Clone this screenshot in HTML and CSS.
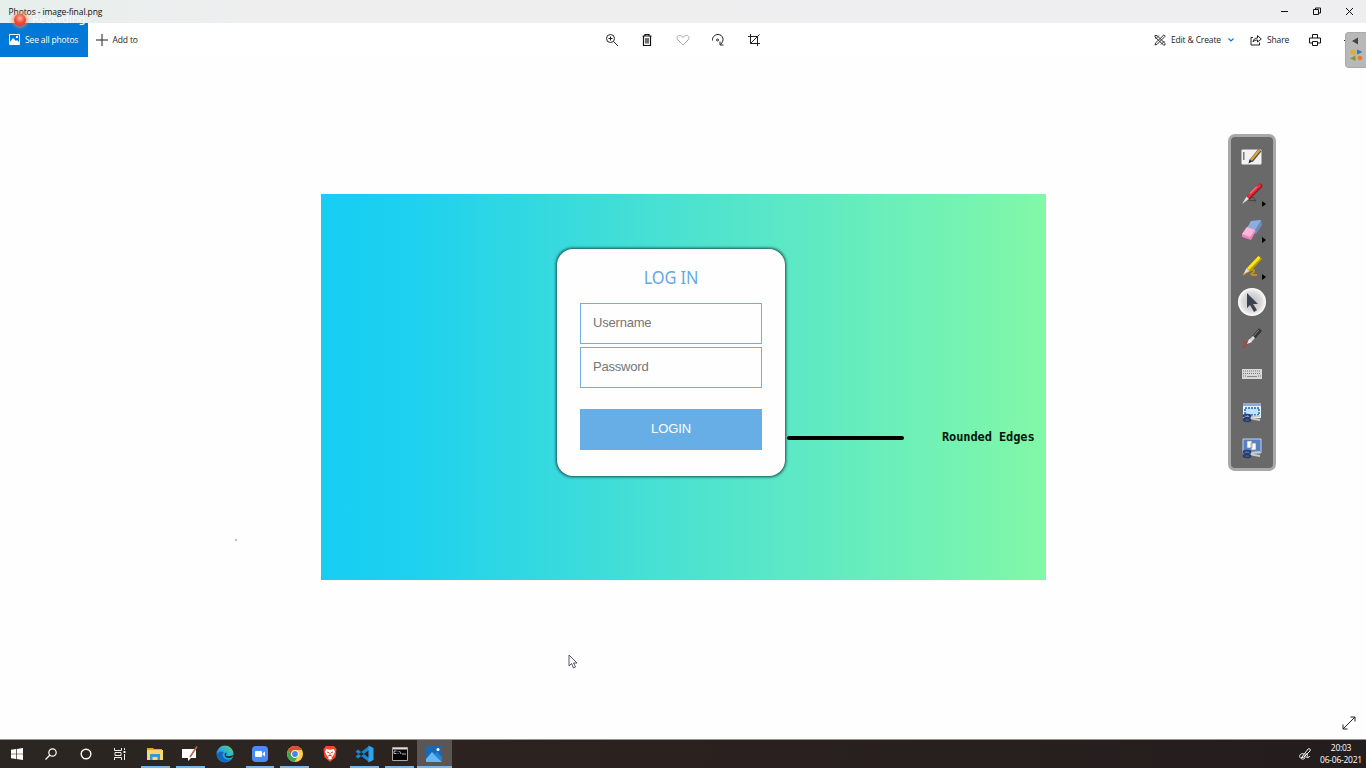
FILE: index.html
```html
<!DOCTYPE html>
<html lang="en">
<head>
<meta charset="utf-8">
<title>Photos - image-final.png</title>
<link rel="stylesheet" href="styles.css">
</head>
<body>
<div class="desktop">
  <header class="titlebar">
    <span class="title">Photos - image-final.png</span>
    <svg class="winctl" width="82" height="23" viewBox="0 0 82 23" fill="none" stroke="#111" stroke-width="1"><path d="M9 11.5h7M41.5 9.5h5v5h-5zM43.5 9.500v-1.500h5v5h-2M74 8l7 7M81 8l-7 7"/></svg>
  </header>
  <nav class="toolbar">
    <div class="see-all">
      <svg width="11" height="11" viewBox="0 0 11 11"><path fill="none" stroke="#fff" d="M.5.5h10v10H.5z"/><path fill="#fff" d="M1 8l3-4 3 3 1-1 2 2v2H1zM7 2h2v2H7z"/></svg>
      <span class="label all-text">See all photos</span>
    </div>
    <div class="add-to">
      <svg width="12" height="12" viewBox="0 0 12 12"><path d="M6 0v12M0 6h12" stroke="#222"/></svg>
      <span class="label add-text">Add to</span>
    </div>
    <div class="tools">
      <svg width="14" height="14" viewBox="0 0 14 14" fill="none" stroke="#222"><circle cx="5.500" cy="5.500" r="4"/><path d="M8.500 8.500l4.500 4.500M3.500 5.500h4M5.500 3.500v4"/></svg>
      <svg width="14" height="14" viewBox="0 0 14 14" fill="none" stroke="#111" stroke-width="1.200"><path d="M2.500 3h9M5 3V1.500h4V3M3.500 3v9.500h7V3M6 5v5.500M8 5v5.500"/></svg>
      <svg width="14" height="14" viewBox="0 0 14 14" fill="none" stroke="#aaa"><path d="M7 12L2 7C0 4.500 1.500 2.500 3.500 2.500 5.500 2.500 6.500 3.500 7 4.500 7.500 3.500 8.500 2.500 10.500 2.500 12.500 2.500 14 4.500 12 7z"/></svg>
      <svg width="14" height="14" viewBox="0 0 14 14" fill="none" stroke="#222"><path d="M1.500 7.500C1 4 4 1.500 7 1.500c5 0 7 6 2.500 10M9 8.500v3.500h3.500"/><circle cx="6.500" cy="7" r="1"/></svg>
      <svg width="14" height="14" viewBox="0 0 14 14" fill="none" stroke="#222"><path d="M3.500 1v9.500H13M1 3.500h9.500V13M3.500 10.500L12.500 1.500"/></svg>
    </div>
    <div class="actions">
      <svg width="12" height="12" viewBox="0 0 12 12" fill="none" stroke="#333"><path d="M1 1.500h2l8 8v1.500H9.500L1 3zM10 .8l1.300 1.300-8 8L1 11l.8-2.300zM1.500 5L5 1.500M7 10.500L10.500 7"/></svg>
      <span class="label edit-text">Edit &amp; Create</span>
      <svg class="chev" width="6" height="4" viewBox="0 0 6 4"><path d="M.5.5L3 3 5.500.5" fill="none" stroke="#0878d0" stroke-width="1.200"/></svg>
      <svg class="share-icon" width="12" height="12" viewBox="0 0 12 12" fill="none" stroke="#222"><path d="M3 3.500H1v7.500h8.500V8.500M3 8c.5-3 2-4 4.500-4V1.500L11.300 5 7.500 8V6C5.500 6 4 6.500 3 8z"/></svg>
      <span class="label share-text">Share</span>
      <svg class="print" width="12" height="12" viewBox="0 0 12 12" fill="none" stroke="#111"><path d="M3.500 4V.5h5V4M3 9H.5V4h11v5H9M3.500 7.500h5v4h-5z"/></svg>
      <span class="dot"></span>
    </div>
  </nav>
  <main class="stage">
    <section class="picture">
      <form class="card">
        <h1>LOG IN</h1>
        <div class="field">Username</div>
        <div class="field">Password</div>
        <div class="login">LOGIN</div>
      </form>
      <div class="callout"><span class="rule"></span><span class="note">Rounded&nbsp;Edges</span></div>
    </section>
    <svg class="expand" width="14" height="14" viewBox="0 0 14 14" fill="none" stroke="#222"><path d="M1 13L13 1M8.500 1H13v4.500M1 8.500V13h4.500"/></svg>
  </main>
  <footer class="taskbar">
    <div class="task sys"><svg width="12" height="12" viewBox="0 0 12 12" fill="#fff"><path d="M0 1.700l5-.7v4.700H0zM5.700.9L12 0v5.700H5.700zM0 6.300h5V11l-5-.7zM5.700 6.300H12V12l-6.300-.9z"/></svg></div>
    <div class="task sys"><svg width="12" height="12" viewBox="0 0 12 12" fill="none" stroke="#fff" stroke-width="1.200"><circle cx="7.500" cy="4.500" r="3.700"/><path d="M5 7L.5 11.500"/></svg></div>
    <div class="task sys"><svg width="12" height="12" viewBox="0 0 12 12"><circle cx="6" cy="6" r="4.800" fill="none" stroke="#fff" stroke-width="1.400"/></svg></div>
    <div class="task sys"><svg width="12" height="12" viewBox="0 0 12 12" fill="none" stroke="#eee"><path d="M.5 0v2.500h7V0M1 4.500h6v3H1zM.5 12V9.500h7V12M10.500 0v2M10.500 6v6"/><path fill="#fff" stroke="none" d="M9.500 3h2v2h-2z"/></svg></div>
    <div class="task open"><svg width="16" height="14" viewBox="0 0 16 14"><path fill="#e9a51f" d="M0 1h6l1 1h8v4H0z"/><path fill="#ffd766" d="M0 3h16v10H0z"/><path fill="#3498db" d="M3 7h10v6h-2.500v-3h-5v3H3z"/></svg></div>
    <div class="task open"><svg width="16" height="16" viewBox="0 0 16 16"><path fill="#fff" d="M0 3h14v9H9l-3 3v-3H0z"/><path d="M15 .5L8 11" stroke="#b8664c" stroke-width="1.600"/></svg></div>
    <div class="task"><svg width="18" height="18" viewBox="0 0 18 18"><defs><linearGradient id="edge" x1="0" y1="1" x2="1" y2="0"><stop stop-color="#1479d4"/><stop offset=".55" stop-color="#26b0dd"/><stop offset="1" stop-color="#67d75b"/></linearGradient></defs><circle cx="9" cy="9" r="8.500" fill="url(#edge)"/><path fill="#1266bd" d="M1 9c2-3 5-3 7-2-2 2-2 5 1 7 2 1 4 1 6 0-3 4-9 4-12 0C1 12 .8 10.500 1 9z"/><path fill="#29231f" d="M10 7.500c1 1 .3 2-.3 2.700 1 1.500 4.300 1.600 7.300-.2l-.5 2c-3 2-7.500.8-7.800-2 0-1 .3-2 1.300-2.500z"/></svg></div>
    <div class="task open"><svg width="16" height="16" viewBox="0 0 16 16"><rect width="16" height="16" rx="4" fill="#4a8cf6"/><rect x="3" y="5" width="7" height="6" rx="1" fill="#fff"/><path fill="#fff" d="M10.500 7.500L13 5.500v5l-2.500-2z"/></svg></div>
    <div class="task open"><svg width="16" height="16" viewBox="0 0 16 16"><circle cx="8" cy="8" r="8" fill="#ffd045"/><path fill="#e34a3b" d="M1.200 4A8 8 0 0 1 15 4H8a4 4 0 0 0-3.500 6z"/><path fill="#37a853" d="M1.200 4A8 8 0 0 0 7.500 16L11 10a4 4 0 0 1-6.500 0z"/><circle cx="8" cy="8" r="3.800" fill="#fff"/><circle cx="8" cy="8" r="2.900" fill="#4385ec"/></svg></div>
    <div class="task"><svg width="14" height="16" viewBox="0 0 14 16"><path fill="#f04a28" d="M3 0h8l2.500 3-.8 8L7 16l-5.700-5L.5 3z"/><path fill="#fff" d="M3 3l4 .7L11 3l1 3-2 4-1.500 1 .5 1.500-2 1.200-2-1.200.5-1.500L4 10 2 6z"/><path d="M4 6l2 .7M10 6l-2 .7M7 7v3M5 10l2-.7 2 .7" stroke="#f04a28" fill="none"/></svg></div>
    <div class="task open"><svg width="18" height="18" viewBox="0 0 18 18"><path fill="#1687d0" d="M0 6l2-1.500 11 8.500v4L0 7zM0 12l2 1.500L13 5V1L0 11z"/><path fill="#2ba5ef" d="M12.500.5L17.500 3v12l-5 2.500z"/></svg></div>
    <div class="task open"><svg width="16" height="14" viewBox="0 0 16 14"><path fill="#050505" stroke="#aaa" d="M.5.5h15v13H.5z"/><path fill="#ddd" d="M1 1h14v1.500H1z"/><path d="M4.500 4H2v2.500h2.500M6 4v.8M6 6v.8M7.500 4l1.500 3M10 7h4" stroke="#ddd" fill="none" stroke-width=".8"/></svg></div>
    <div class="task open active"><svg width="16" height="16" viewBox="0 0 16 16"><path fill="#1769b5" d="M0 0h16v16H0z"/><path fill="#65b8f1" d="M0 13l6-7 10 10H0z"/><path fill="#2383d3" d="M8 8l3-2 5 5v5z"/><circle cx="12" cy="3.500" r="1.500" fill="#fff"/></svg></div>
    <div class="tray">
      <svg width="12" height="14" viewBox="0 0 12 14" fill="none" stroke="#eee"><path d="M3 10l6-8c1-1 3 0 2 2L5 10l-3 1zM5 7C2 6 0 8 .8 10s4 3 5 1-1-3 1-4 2 2 1 3 2 1 3-1"/></svg>
      <div class="clock"><span class="time">20:03</span><span class="date">06-06-2021</span></div>
    </div>
  </footer>

  <div class="recording"><span class="lamp"></span><span class="rec-text">Recording</span></div>
  <div class="sidetab">
    <svg width="21" height="35" viewBox="0 0 21 35"><path fill="#444" d="M6 8l6-3.500v7z"/><path fill="#e0ac36" d="M4.500 17h5v4.500h-5z"/><path fill="#287faf" d="M11 16.500l5.500 2.500-5.500 2.500z"/><path fill="#829d25" d="M9.500 22.500v5.500l-5.500-2.700z"/><circle cx="14" cy="25" r="2.300" fill="#f27824"/></svg>
  </div>
  <aside class="palette">
    <div class="tool"><svg width="22" height="18" viewBox="0 0 22 18"><rect x=".5" y="1.500" width="20" height="15" rx="1" fill="#f2f2f2"/><path fill="#777" d="M2 4h1.500v8H2z"/><path d="M19 2L10 13" stroke="#555" stroke-width="4"/><path d="M18.500 2L10 12" stroke="#dba63c" stroke-width="2.200"/><path fill="#222" d="M7.500 15.500l1-4 2.500 2z"/></svg></div>
    <div class="tool"><svg width="22" height="22" viewBox="0 0 22 22"><path d="M6 17l6-3 3 4-8-1" stroke="#444" fill="none"/><path d="M19 3L8 14" stroke="#951722" stroke-width="4.500" stroke-linecap="round"/><path d="M18.500 2.500L7.500 13.500" stroke="#f52c3c" stroke-width="2.800" stroke-linecap="round"/><path d="M16 3.500l-7 7" stroke="#ffb3b3"/><path fill="#ddd" d="M5.500 13.500l2.500 2.500-7 5z"/></svg></div>
    <div class="tool"><svg width="22" height="22" viewBox="0 0 22 22"><path fill="#6c8cc0" d="M10 2l10-1 1 5-6 9-9-4z"/><path fill="#8eaddd" d="M10 2l10-1-6 10-8-2z"/><path fill="#ed82bd" d="M6 8l9 4-5 9-9-3v-3z"/><path fill="#ffb7d9" d="M6 8l8 3-5 7-8-3z"/></svg></div>
    <div class="tool"><svg width="22" height="22" viewBox="0 0 22 22"><path d="M2 20c5-4 10-7 11-4 1 2-6 3-1 4h4" stroke="#c58d21" stroke-width="2" fill="none"/><path d="M19.500 2.500L8 15" stroke="#b29a00" stroke-width="4.500"/><path d="M18.500 2L7 14" stroke="#ffe510" stroke-width="3"/><path fill="#ddd" d="M5.500 13l3 3-6 3z"/></svg></div>
    <div class="tool pointer"><svg width="30" height="30" viewBox="0 0 30 30"><defs><radialGradient id="knob"><stop stop-color="#bbb"/><stop offset=".7" stop-color="#ddd"/><stop offset="1" stop-color="#fff"/></radialGradient></defs><circle cx="15" cy="15" r="14" fill="url(#knob)"/><path fill="#3d4252" d="M10 6v15l3-3 4 7 3-2-4-6h5z"/></svg></div>
    <div class="tool"><svg width="22" height="22" viewBox="0 0 22 22"><path d="M2 13l5 2-5 5M2 19l6-4" stroke="#a64444" stroke-width="1.500" fill="none"/><path d="M19.500 1.500l-7 8" stroke="#333" stroke-width="4"/><path d="M18 2l-7 8" stroke="#888"/><path d="M13 9l-4 4" stroke="#ddd" stroke-width="3"/><path fill="#eee" d="M8 11l3 3-5 2z"/></svg></div>
    <div class="tool keys"><svg width="22" height="10" viewBox="0 0 22 10"><path fill="#d8d8d8" d="M1 0h20v10H1z"/><path d="M2 2h18M2 4.500h18M2 7h3M17 7h3" stroke="#777" stroke-dasharray="1 1"/><path d="M6 7.500h10" stroke="#888"/></svg></div>
    <div class="tool"><svg width="20" height="22" viewBox="0 0 20 22"><path fill="#e8f4ff" d="M1 2h18v15H1z"/><path fill="#8baadb" d="M1 2h18v3H1z"/><path fill="#bfe4ff" stroke="#1a61bb" stroke-width="1.500" stroke-dasharray="2 1" d="M3 7h14v7H3z"/><path d="M7 16l11-1M7 17l11 2" stroke="#ccc" stroke-width="1.800"/><g fill="none" stroke="#253d71" stroke-width="1.800"><ellipse cx="5" cy="15" rx="3.500" ry="1.400"/><ellipse cx="5" cy="19" rx="3.500" ry="1.400"/></g></svg></div>
    <div class="tool"><svg width="20" height="22" viewBox="0 0 20 22"><path fill="#567fc8" stroke="#bfd3f2" d="M1 2h18v14H1z"/><path fill="#fff" stroke="#789" stroke-width=".7" d="M5 4h5v7H5zM9 6h5v7H9z"/><path d="M7 16l11-1M7 17l11 2" stroke="#ccc" stroke-width="1.800"/><g fill="none" stroke="#253d71" stroke-width="1.800"><ellipse cx="5" cy="15" rx="3.500" ry="1.400"/><ellipse cx="5" cy="19" rx="3.500" ry="1.400"/></g></svg></div>
    <i class="more more-pen"></i><i class="more more-eraser"></i><i class="more more-marker"></i>
  </aside>
  <svg class="cursor" width="10" height="15" viewBox="0 0 10 15"><path fill="#fff" stroke="#445" stroke-width=".9" d="M1 1v11l2.500-2.500L5.500 14l2-1-2-4H9z"/></svg>
  <span class="speck"></span>
</div>
</body>
</html>
```

FILE: styles.css
```css
* { box-sizing: border-box; }
body { margin: 0; font-family: "Open Sans", sans-serif; overflow: hidden; }
svg { display: block; flex: none; }
.desktop { position: relative; width: 1366px; height: 768px; display: flex; flex-direction: column; background: #fefefe; }
.titlebar { height: 23px; flex: none; display: flex; justify-content: space-between; align-items: center; padding: 0 12px 0 8.5px; background: linear-gradient(90deg, #e6efec, #eeeeef 18%, #eeeef0); }
.title { font-size: 8.5px; letter-spacing: -.09px; color: #111; white-space: nowrap; padding-bottom: 1px; }
.toolbar { height: 34px; flex: none; display: flex; align-items: center; background: #fff; }
.label { font-size: 8.5px; white-space: nowrap; color: #222; letter-spacing: -.15px; padding-bottom: 2px; }
.see-all { width: 87.5px; height: 34px; display: flex; align-items: center; gap: 5px; padding-left: 9px; background: #0078d7; }
.see-all .label { color: #fff; }
.see-all svg, .actions svg { margin-bottom: 1px; }
.add-to { width: 517px; display: flex; align-items: center; gap: 5px; padding-left: 8px; }
.add-to svg { margin-bottom: 1px; }
.tools { width: 549.5px; display: flex; gap: 21.600px; }
.actions { display: flex; align-items: center; flex: 1; }
.edit-text { margin-left: 5px; width: 53px; }
.chev { margin-left: 4px; }
.share-icon { margin-left: 16px; }
.share-text { margin-left: 5px; width: 22px; }
.print { margin-left: 20px; }
.dot { width: 2px; height: 1px; background: #222; margin-left: 23px; }
.stage { flex: 1; padding: 137px 0 0 320.500px; display: flex; }
.picture { width: 725.500px; height: 386px; display: flex; align-items: flex-start; padding: 55px 0 0 236.500px; background: linear-gradient(90deg, #17cdf2 0%, #1bd0f0 10%, #4ce2d0 50%, #67edbd 75%, #82f8a7 100%); }
.card { width: 228px; height: 227px; flex: none; padding: 16px 23px 0; display: flex; flex-direction: column; background: #fefefe; border-radius: 16px; box-shadow: 0 0 3px .6px #164d50; }
.card h1 { height: 38px; margin: 0; text-align: center; font: 400 18px/25px "Noto Sans", sans-serif; letter-spacing: -.1px; transform: scaleX(.91); color: #67a9e1; }
.field { height: 41px; flex: none; margin-bottom: 3px; padding-left: 12px; border: 1px solid #72aedc; font: 13px/38px "Liberation Sans", Arial, sans-serif; letter-spacing: -.2px; color: #757575; }
.login { height: 41px; flex: none; margin-top: 18px; background: #67aee6; color: #fff; font: 13px/40px "Liberation Sans", Arial, sans-serif; letter-spacing: -.1px; text-align: center; }
.callout { display: flex; align-items: center; height: 20px; margin: 178px 0 0 2px; }
.rule { width: 117px; height: 4px; border-radius: 2px; background: #000; margin-top: 1px; }
.note { margin-left: 38px; font: bold 12px/18px "DejaVu Sans Mono", monospace; letter-spacing: -.1px; color: #06150c; white-space: nowrap; }
.expand { margin: 521.500px 0 0 296px; }
.taskbar { height: 29px; flex: none; display: flex; background: linear-gradient(90deg, #2b2622, #2c2320 35%, #241d1d); border-top: 1px solid #96938f; }
.task { width: 34.900px; height: 28px; padding-bottom: 1px; display: flex; align-items: center; justify-content: center; position: relative; }
.sys { width: 34.300px; }
.sys + .open { margin-left: .7px; }
.open::after { content: ""; position: absolute; left: 3px; right: 3px; bottom: 0; height: 2px; background: #77b6e7; }
.active { background: #5b5654; }
.active::after { left: 0; right: 0; }
.tray { margin-left: auto; display: flex; align-items: center; padding: 0 4px 1px 0; gap: 9px; }
.clock { width: 42px; display: flex; flex-direction: column; align-items: center; font-size: 8.5px; line-height: 12px; color: #fff; white-space: nowrap; letter-spacing: -.25px; }
.recording { position: absolute; left: 14px; top: 12px; display: flex; align-items: center; gap: 6px; height: 16px; }
.lamp { width: 12px; height: 12px; border-radius: 50%; background: radial-gradient(circle at 50% 35%, #ffb0a0, #ee4a36 50%, #d93726); box-shadow: 0 0 4px 1px #ff8352; }
.rec-text { font: 11px/16px "DejaVu Sans", sans-serif; color: #fff; text-shadow: 0 0 1px #ccd4d2; letter-spacing: -.2px; }
.sidetab { position: absolute; left: 1344.500px; top: 32px; width: 21.500px; height: 36px; background: #b8b8b8; border: 1px solid #aaa; border-right: 0; border-radius: 4px 0 0 4px; overflow: hidden; }
.palette { position: absolute; left: 1228px; top: 134px; width: 47.5px; height: 337px; border: 3px solid #a8a8a8; border-radius: 7px; background: #696969; display: flex; flex-direction: column; align-items: center; padding-top: 2px; }
.tool { height: 36.400px; display: flex; align-items: center; flex: none; }
.pointer { padding-bottom: 2px; }
.keys { padding-bottom: 3px; }
.more { position: absolute; left: 31px; border-left: 4px solid #000; border-top: 3px solid transparent; border-bottom: 3px solid transparent; }
.more-pen { top: 64px; }
.more-eraser { top: 100px; }
.more-marker { top: 137px; }
.cursor { position: absolute; left: 567.500px; top: 654px; }
.speck { position: absolute; left: 235px; top: 539px; width: 2px; height: 2px; background: #cbb9bd; }
```
